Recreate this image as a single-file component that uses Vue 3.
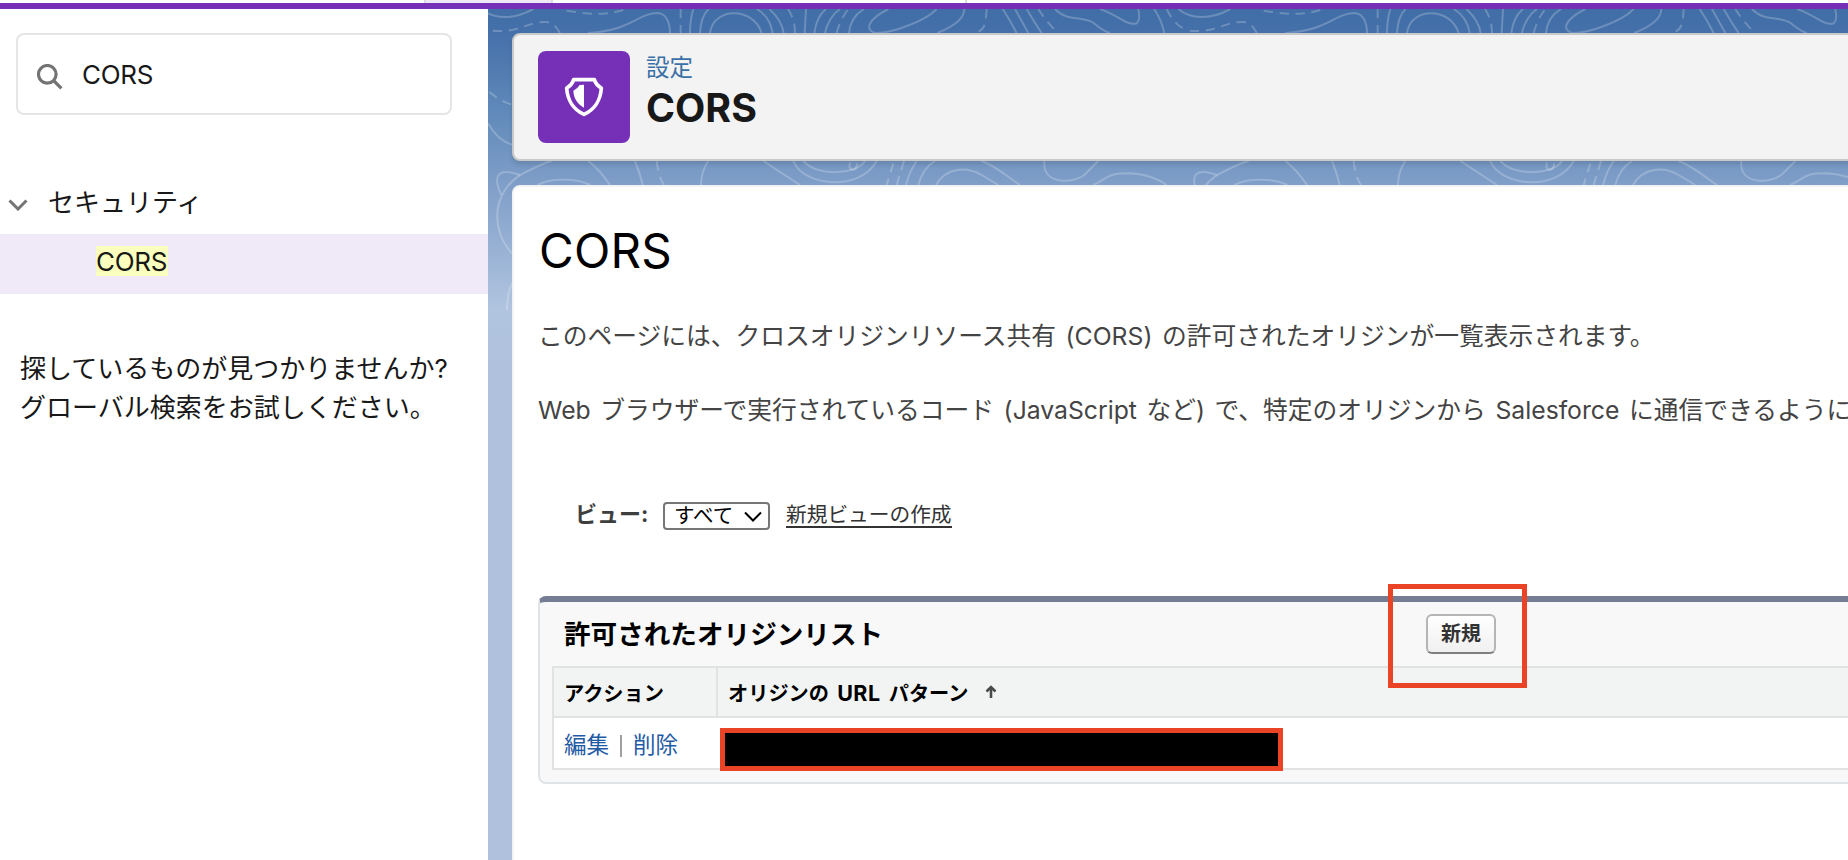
<template>
    <div class="page" lang="ja">
        <div class="tab-strip">
            <div class="active-tab"></div>
            <div class="next-tab"></div>
        </div>
        <div class="body">
            <aside class="sidebar">
                <label class="search">
                    <svg class="search-icon" viewBox="0 0 26 26">
                        <circle cx="10.3" cy="10.3" r="8.8" />
                        <path d="M16.5 16.5 L24.4 24.4" />
                    </svg>
                    <input v-model="query" type="text" />
                </label>
                <div class="section" @click="open = !open">
                    <svg class="chevron" viewBox="0 0 20 12">
                        <path d="M1.5 1.5 L10 10 L18.5 1.5" />
                    </svg>
                    <span>セキュリティ</span>
                </div>
                <div v-if="open" class="section-item"><mark>CORS</mark></div>
                <p class="hint">探しているものが見つかりませんか?<br />グローバル検索をお試しください。</p>
            </aside>

            <main class="content">
                <svg class="topography" viewBox="1464 27 4080 2553">
                    <g v-for="offset in tiles" :key="offset" :transform="`translate(${offset} 0)`">
                        <path v-for="d in contours" :key="d" :d="d" />
                        <path v-for="d in dashedContours" :key="d" class="dashed" :d="d" />
                    </g>
                </svg>

                <header class="page-header">
                    <div class="header-icon">
                        <svg viewBox="174 153 276 276">
                            <path class="shield" d="M281 239 H343 Q348 255 364 264 C362 300 343 329 312 343 C281 329 262 300 260 264 Q276 255 281 239 Z" />
                            <path class="half" d="M312 254 V323 C290 310 281 293 280 272 Q292 267 299 255 Z" />
                        </svg>
                    </div>
                    <div class="header-text">
                        <div class="crumb">設定</div>
                        <h1>CORS</h1>
                    </div>
                </header>

                <section class="card">
                    <h2>CORS</h2>
                    <p class="lead">このページには、クロスオリジンリソース共有 (CORS) の許可されたオリジンが一覧表示されます。</p>
                    <p class="lead second">Web ブラウザーで実行されているコード (JavaScript など) で、特定のオリジンから Salesforce に通信できるように</p>

                    <div class="view-row">
                        <span class="view-label">ビュー:</span>
                        <div class="select">
                            <span>すべて</span>
                            <svg viewBox="0 0 18 11"><path d="M1 1.5 L9 9.5 L17 1.5" /></svg>
                        </div>
                        <a class="new-view">新規ビューの作成</a>
                    </div>

                    <div class="list">
                        <div class="list-head">
                            <h3>許可されたオリジンリスト</h3>
                            <div class="button-wrap">
                                <button>新規</button>
                                <div class="callout"></div>
                            </div>
                        </div>
                        <div class="table">
                            <div class="row head">
                                <div class="cell action">アクション</div>
                                <div class="cell pattern">
                                    <span>オリジンの <span class="latin">URL</span> パターン</span>
                                    <svg class="sort" viewBox="0 0 12 14"><path d="M6 13 V2 M1.5 6.5 L6 2 L10.5 6.5" /></svg>
                                </div>
                            </div>
                            <div class="row">
                                <div class="cell action">
                                    <a>編集</a><i class="bar"></i><a>削除</a>
                                </div>
                                <div class="masked"></div>
                            </div>
                        </div>
                    </div>
                </section>
            </main>
        </div>
    </div>
</template>

<script setup>
import { ref } from 'vue';

const query = ref('CORS');
const open = ref(true);

// the contour drawing repeats every 697px, paths are drawn at three times the size
const tiles = [0, 2091];

const contours = [
    'M1444 27 C1480 58 1540 60 1600 27',
    'M1765 99 C1900 90 1910 40 1975 39 C2000 42 2010 70 2010 99',
    'M2070 99 Q2070 60 2080 27',
    'M2100 99 C2102 60 2112 40 2126 27',
    'M2130 99 C2140 20 2260 20 2285 99',
    'M2270 27 Q2310 50 2318 99',
    'M2308 27 Q2345 60 2351 99',
    'M2418 27 L2414 99',
    'M2443 99 C2448 60 2462 40 2478 27',
    'M2475 99 C2480 70 2500 40 2520 27',
    'M2547 99 C2550 65 2570 40 2592 27',
    'M2665 27 C2600 60 2595 90 2625 99 C2680 100 2780 60 2810 27',
    'M2812 99 C2860 80 2893 55 2893 27',
    'M3008 27 Q3030 60 3050 99',
    'M3045 27 L3085 99',
    'M3080 27 Q3105 70 3125 99',
    'M3165 27 C3200 65 3245 48 3280 68 C3300 85 3315 95 3330 99',
    'M3300 27 C3355 45 3375 75 3408 71 C3425 60 3415 35 3415 27',
    'M3462 27 Q3485 60 3493 99',
    'M1464 370 Q1495 425 1540 435',
    'M1504 585 C1478 530 1490 500 1560 525',
    'M1536 760 C1470 690 1470 560 1590 510 C1620 495 1640 487 1655 483',
    'M1765 483 C1800 510 1820 540 1830 555',
    'M1612 555 C1650 534 1730 534 1771 555',
    'M1905 483 Q1920 520 1928 555',
    'M2125 483 Q2103 515 2103 555',
    'M2290 483 L2400 555',
    'M2380 483 C2410 560 2580 575 2630 483',
    'M2410 483 C2450 530 2570 525 2595 483',
    'M2550 487 C2540 515 2572 518 2571 490',
    'M2718 555 Q2730 510 2750 483',
    'M2755 555 C2765 515 2785 495 2805 483',
    'M2808 555 C2840 500 2900 500 2945 525 L2995 555',
    'M2945 483 C2990 500 3030 535 3060 555',
    'M3133 483 C3125 560 3230 550 3258 520 L3295 483',
    'M3280 555 C3330 530 3320 520 3390 520 C3440 522 3480 540 3500 555',
    'M1540 845 Q1522 870 1521 930'
];

const dashedContours = [
    'M1478 92 C1560 100 1580 64 1640 66 C1665 70 1670 85 1680 99',
    'M1700 32 C1780 45 1820 45 1870 30',
    'M2042 27 V99',
    'M2364 27 Q2385 60 2385 99',
    'M2510 99 Q2520 60 2545 27',
    'M2960 27 C2957 70 2957 90 2925 99',
    'M3115 27 Q3135 60 3165 90',
    'M3500 27 Q3525 80 3565 92',
    'M1468 275 Q1500 305 1540 315',
    'M1970 483 Q1975 530 1992 555',
    'M2680 490 L2660 555',
    'M2712 483 L2690 555'
];
</script>

<style>
body {
    margin: 0;
    overflow: hidden;
}
</style>

<style scoped>
.page {
    width: 1848px;
    height: 860px;
    overflow: hidden;
    background: white;
    color: #181818;
    font-family: Inter, "Noto Sans CJK JP", sans-serif;
    font-size: 26px;
}

.page * {
    box-sizing: border-box;
}

svg {
    fill: none;
}

.tab-strip {
    display: flex;
    height: 9px;
    border-bottom: 6px solid #762fb7;
}

.active-tab {
    width: 129px;
    margin-left: 424px;
    background: #efe9f7;
    border-left: 2px solid #dddbe0;
    border-right: 2px solid #dddbe0;
}

.next-tab {
    width: 414px;
    border-right: 2px solid #dddddd;
}

.body {
    display: flex;
    height: 851px;
}

.sidebar {
    width: 488px;
    flex: none;
    padding-top: 24px;
}

.search {
    display: flex;
    align-items: center;
    width: 436px;
    height: 82px;
    margin-left: 16px;
    padding-left: 19px;
    border: 2px solid #e5e5e5;
    border-radius: 8px;
}

.search-icon {
    width: 26px;
    height: 26px;
    margin-top: 6px;
    stroke: #747474;
    stroke-width: 3.2;
}

.search input {
    width: 300px;
    margin-left: 19px;
    padding: 0;
    border: none;
    outline: none;
    font: inherit;
    color: inherit;
    letter-spacing: -0.3px;
}

.section {
    display: flex;
    align-items: center;
    height: 59px;
    margin-top: 60px;
    padding: 0 0 4px 8px;
    line-height: 40px;
}

.chevron {
    width: 20px;
    height: 12px;
    margin: 4px 20px 0 0;
    stroke: #747474;
    stroke-width: 3;
}

.section-item {
    height: 60px;
    padding: 12px 0 0 96px;
    background: #f0eaf8;
    line-height: 31px;
    letter-spacing: -0.3px;
}

mark {
    display: inline-block;
    width: 72px;
    height: 30px;
    background: #faffbd;
    color: inherit;
}

.hint {
    margin: 55px 0 0 20px;
    line-height: 39px;
    white-space: nowrap;
}

.content {
    position: relative;
    flex: 1;
    min-width: 0;
    padding: 24px 0 0 24px;
    background: linear-gradient(#416ea6 0, #4570aa 25px, #5f89b9 100px, #7f9ec8 175px, #b0c4df 300px, #b0c1dd 360px);
}

.topography {
    position: absolute;
    top: 0;
    left: 0;
    width: 1360px;
    height: 851px;
    stroke: rgba(255, 255, 255, 0.22);
    stroke-width: 6;
}

.dashed {
    stroke-dasharray: 28 20;
}

.page-header {
    position: relative;
    display: flex;
    width: 1400px;
    height: 128px;
    padding: 16px 24px;
    background: #f3f3f3;
    border: 2px solid #c9c9c9;
    border-radius: 8px;
    box-shadow: 0 4px 4px rgba(0, 0, 0, 0.1);
}

.header-icon {
    width: 92px;
    height: 92px;
    background: #762fb7;
    border-radius: 8px;
}

.header-icon svg {
    display: block;
    width: 92px;
    height: 92px;
}

.shield {
    stroke: white;
    stroke-width: 11;
    stroke-linejoin: round;
}

.half {
    fill: white;
}

.header-text {
    margin-left: 16px;
}

.crumb {
    height: 33px;
    line-height: 33px;
    font-size: 23.5px;
    color: #3a70a5;
}

h1 {
    margin: 0;
    font-size: 39.3px;
    line-height: 47px;
    font-weight: 700;
}

.card {
    position: relative;
    width: 1400px;
    height: 800px;
    margin-top: 24px;
    padding: 36px 0 0 24px;
    background: white;
    border: 2px solid #f3f3f3;
    border-radius: 8px;
}

h2 {
    margin: 0 0 0 1px;
    color: black;
    font-size: 47.5px;
    line-height: 56px;
    font-weight: 400;
    letter-spacing: 0.2px;
}

.lead {
    margin: 37px 0 0;
    color: #444444;
    font-size: 24.75px;
    line-height: 40px;
    word-spacing: 2.6px;
    white-space: nowrap;
}

.second {
    margin-top: 34px;
}

.view-row {
    display: flex;
    align-items: center;
    height: 30px;
    margin: 71px 0 0 37px;
}

.view-label {
    width: 88px;
    padding-bottom: 4px;
    font-size: 22px;
    font-weight: 700;
    line-height: 30px;
    color: #3e3e3e;
}

.select {
    display: flex;
    align-items: center;
    justify-content: space-between;
    width: 107px;
    height: 28px;
    padding: 0 6px 0 9px;
    border: 2px solid #767676;
    border-radius: 4px;
    background: white;
    color: black;
    font-size: 20.5px;
    line-height: 24px;
}

.select svg {
    width: 18px;
    height: 11px;
    stroke: black;
    stroke-width: 2;
}

.new-view {
    height: 25px;
    margin: 0 0 1px 16px;
    border-bottom: 2px solid #333333;
    color: #333333;
    font-size: 20.7px;
    line-height: 24px;
}

.list {
    height: 188px;
    margin-top: 65px;
    padding-left: 12px;
    background: #f8f8f8;
    border: 2px solid #e0e3e5;
    border-top: 6px solid #757d95;
    border-radius: 8px;
}

.list-head {
    display: flex;
    align-items: center;
    height: 64px;
}

h3 {
    width: 861px;
    margin: 0;
    padding: 0 0 1px 12px;
    color: black;
    font-size: 26.6px;
    line-height: 40px;
    font-weight: 700;
}

.button-wrap {
    position: relative;
    margin-left: 13px;
}

button {
    display: block;
    width: 70px;
    height: 40px;
    padding: 0;
    border: 2px solid #b5b5b5;
    border-bottom-color: #7f7f7f;
    border-radius: 6px;
    background: linear-gradient(white, #f0f0f0);
    color: #333333;
    font-family: inherit;
    font-size: 20px;
    line-height: 36px;
    font-weight: 700;
}

button:hover {
    cursor: pointer;
}

.callout {
    position: absolute;
    top: -30px;
    left: -38px;
    width: 139px;
    height: 104px;
    border: 5px solid #eb4326;
    pointer-events: none;
}

.table {
    border: 2px solid #e0e3e2;
    background: white;
}

.row {
    display: flex;
    height: 50px;
}

.head {
    background: #f2f4f3;
    border-bottom: 2px solid #e0e3e2;
    color: black;
    font-size: 20.2px;
    font-weight: 700;
}

.cell {
    display: flex;
    align-items: center;
}

.action {
    width: 164px;
    padding-left: 10px;
}

.head .action {
    padding-top: 1px;
    border-right: 2px solid #e0e3e2;
}

.pattern {
    padding-left: 10px;
    word-spacing: 3.5px;
}

.latin {
    font-size: 21.5px;
    letter-spacing: 0.4px;
}

.sort {
    width: 12px;
    height: 14px;
    margin-left: 17px;
    stroke: #4a4a4a;
    stroke-width: 2.6;
}

.row a {
    color: #1f5ba5;
    font-size: 22.5px;
    line-height: 40px;
    padding-top: 3px;
}

.bar {
    width: 2px;
    height: 22px;
    margin: 6px 11px 0 11px;
    background: #a0a0a0;
}

.masked {
    width: 563px;
    height: 43px;
    margin: 10px 0 0 2px;
    background: black;
    border: 5px solid #eb4326;
}
</style>
